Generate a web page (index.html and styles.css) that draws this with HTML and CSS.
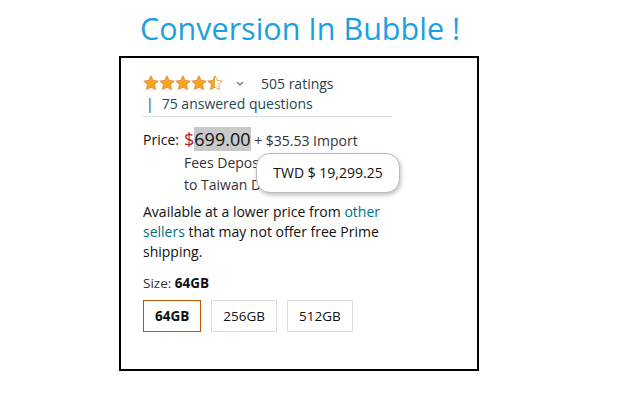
FILE: index.html
```html
<!DOCTYPE html>
<html>
<head>
    <title>Conversion In Bubble</title>
    <link rel="stylesheet" href="styles.css">
</head>
<body>
    <h1 class="title">Conversion In Bubble !</h1>
    <div class="card">
        <div class="rating-row">
            <span class="stars">
                <svg width="80" height="16" viewBox="0 0 80 16">
                    <defs>
                        <linearGradient id="half">
                            <stop offset="50%" stop-color="#f5a623"/>
                            <stop offset="50%" stop-color="#fff"/>
                        </linearGradient>
                        <path id="star" d="M8 0.8l2.2 4.6 5 .7-3.6 3.5.9 5-4.5-2.4-4.5 2.4.9-5L0.8 6.1l5-.7z"/>
                    </defs>
                    <use href="#star" x="0" fill="#f5a623" stroke="#de7921" stroke-width="0.7"/>
                    <use href="#star" x="16" fill="#f5a623" stroke="#de7921" stroke-width="0.7"/>
                    <use href="#star" x="32" fill="#f5a623" stroke="#de7921" stroke-width="0.7"/>
                    <use href="#star" x="48" fill="#f5a623" stroke="#de7921" stroke-width="0.7"/>
                    <use href="#star" x="64" fill="url(#half)" stroke="#de7921" stroke-width="0.7"/>
                </svg>
            </span>
            <svg class="chevron" width="8" height="5" viewBox="0 0 8 5">
                <path d="M1 1l3 3 3-3" fill="none" stroke="#666" stroke-width="1.1"/>
            </svg>
            <span class="ratings">505 ratings</span>
        </div>
        <div class="answers"><span class="bar">|</span>75 answered questions</div>

        <div class="price-block">
            <span class="price-label">Price:</span>
            <div class="price-text">
                <span class="dollar">$</span><span class="amount">699.00</span>
                <span class="import">+ $35.53 Import</span><br>
                Fees Depos<br>
                to Taiwan D
            </div>
            <div class="bubble">TWD $ 19,299.25</div>
        </div>

        <p class="lower-price">
            <span>Available at a lower price from <span class="link">other</span></span><br>
            <span><span class="link">sellers</span> that may not offer free Prime</span><br>
            <span>shipping.</span>
        </p>

        <div class="size-label">Size: <b>64GB</b></div>
        <div class="sizes">
            <button class="size selected">64GB</button>
            <button class="size">256GB</button>
            <button class="size">512GB</button>
        </div>
    </div>
</body>
</html>
```

FILE: styles.css
```css
body {
    margin: 0;
    background: #fff;
    font-family: "Open Sans", "Noto Sans", sans-serif;
    color: #111;
}

.title {
    margin: 7px 40px 0 0;
    height: 49px;
    text-align: center;
    font-size: 30.5px;
    font-weight: normal;
    color: #1ba1e2;
}

.card {
    box-sizing: border-box;
    margin-left: 119px;
    width: 360px;
    height: 315px;
    border: 2px solid #000;
    padding: 14px 22px 0 22px;
    font-size: 14px;
}

.rating-row {
    display: flex;
    align-items: center;
    height: 22px;
}

.stars svg {
    display: block;
}

.chevron {
    margin-left: 13px;
}

.ratings {
    margin-left: 17px;
    color: #2f3f44;
}

.answers {
    width: 246px;
    padding: 0 0 2px 3px;
    border-bottom: 1px solid #ddd;
    color: #24484f;
    line-height: 20px;
}

.bar {
    margin-right: 8px;
}

.price-block {
    position: relative;
    display: flex;
    margin-top: 11px;
}

.price-label {
    width: 41px;
    line-height: 24px;
}

.price-text {
    line-height: 22px;
    color: #333;
}

.dollar {
    color: #c0182f;
    font-size: 18px;
}

.amount {
    background: #c9c9c9;
    font-size: 18px;
    color: #111;
}

.import {
    font-size: 14px;
}

.bubble {
    position: absolute;
    left: 113px;
    top: 25px;
    width: 144px;
    height: 40px;
    box-sizing: border-box;
    border: 1px solid #bbb;
    border-radius: 14px;
    background: #fff;
    box-shadow: 1px 2px 4px rgba(0, 0, 0, 0.25);
    text-align: center;
    line-height: 38px;
    font-size: 14px;
}

.lower-price {
    margin: 6px 0 0;
    line-height: 20px;
}

.link {
    color: #007185;
}

.size-label {
    margin-top: 12px;
    font-size: 13.5px;
    color: #333;
}

.size-label b {
    color: #111;
}

.sizes {
    display: flex;
    gap: 10px;
    margin-top: 8px;
}

.size {
    height: 32px;
    padding: 0 11px;
    border: 1px solid #ddd;
    background: #fff;
    font-family: inherit;
    font-size: 13.5px;
    color: #111;
}

.size.selected {
    border-color: #c45500;
    font-weight: bold;
    padding: 0 11px;
}
```
